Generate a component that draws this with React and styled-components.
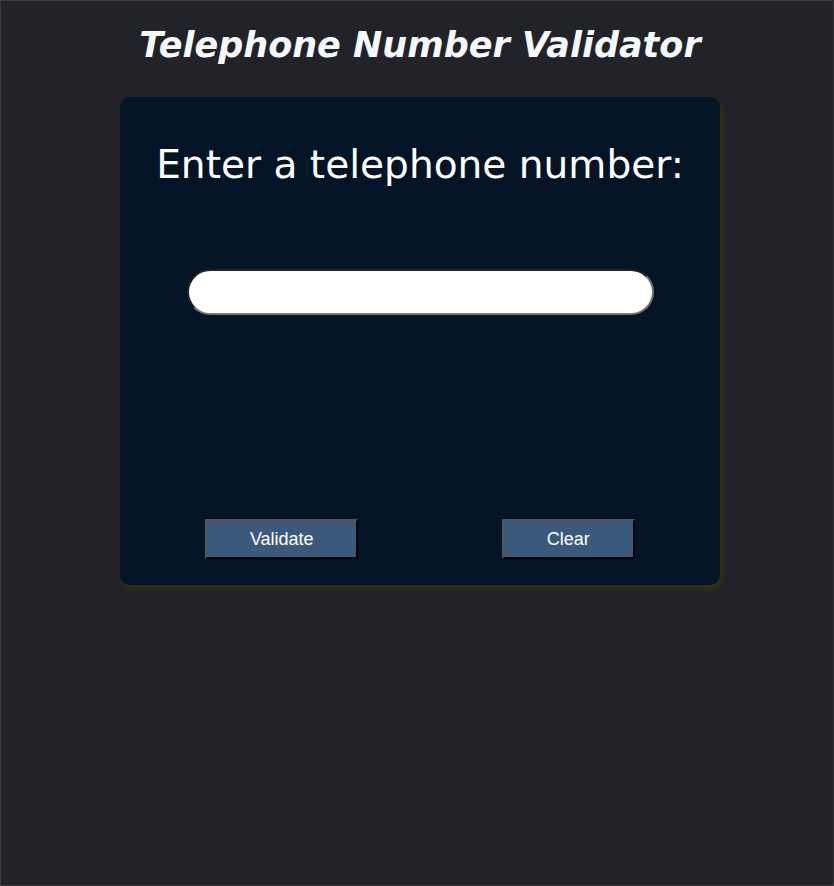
import React from 'react'
import styled, { createGlobalStyle } from 'styled-components'

const GlobalStyle = createGlobalStyle`
  html, body {
    margin: 0;
    padding: 0;
    background: #222328;
  }
`

const Page = styled.div`
  box-sizing: border-box;
  height: 886px;
  border: 1px solid #3a3b3f;
  background: #222328;
  display: flex;
  flex-direction: column;
  align-items: center;
  padding-left: 6px;
`

const Title = styled.h1`
  margin: 23px 0 31px;
  font-family: 'DejaVu Sans', Verdana, sans-serif;
  font-weight: bold;
  font-style: italic;
  font-size: 35px;
  line-height: 42px;
  color: #f5f8fc;
`

const Card = styled.div`
  box-sizing: border-box;
  width: 600px;
  height: 488px;
  background: #021426;
  border-radius: 10px;
  box-shadow: 2px 3px 5px #2f3a0c;
  display: flex;
  flex-direction: column;
  align-items: center;
  padding: 0 13.5px;
`

const Label = styled.label`
  margin-top: 44px;
  font-family: 'DejaVu Sans', Verdana, sans-serif;
  font-size: 39.1px;
  line-height: 48px;
  color: #ffffff;
`

const Input = styled.input`
  box-sizing: border-box;
  margin-top: 80px;
  width: 467px;
  height: 46px;
  border-radius: 23px;
  border: 2px inset #767676;
  background: #ffffff;
  outline: none;
  padding: 0 16px;
  font-size: 18px;
`

const ButtonRow = styled.div`
  margin-top: auto;
  margin-bottom: 26px;
  width: 100%;
  display: flex;
  justify-content: space-around;
`

const Button = styled.button`
  box-sizing: border-box;
  width: ${p => p.w}px;
  height: 40px;
  background: #3b5a7b;
  color: #ffffff;
  border: 2px outset #555555;
  border-right-color: #000;
  border-bottom-color: #000;
  font-family: 'Liberation Sans', Arial, sans-serif;
  font-size: 18px;
  cursor: pointer;
`

export default function App() {
  return (
    <Page>
      <GlobalStyle />
      <Title>Telephone Number Validator</Title>
      <Card>
        <Label htmlFor="user-input">Enter a telephone number:</Label>
        <Input id="user-input" type="text" />
        <ButtonRow>
          <Button w={153}>Validate</Button>
          <Button w={133}>Clear</Button>
        </ButtonRow>
      </Card>
    </Page>
  )
}
